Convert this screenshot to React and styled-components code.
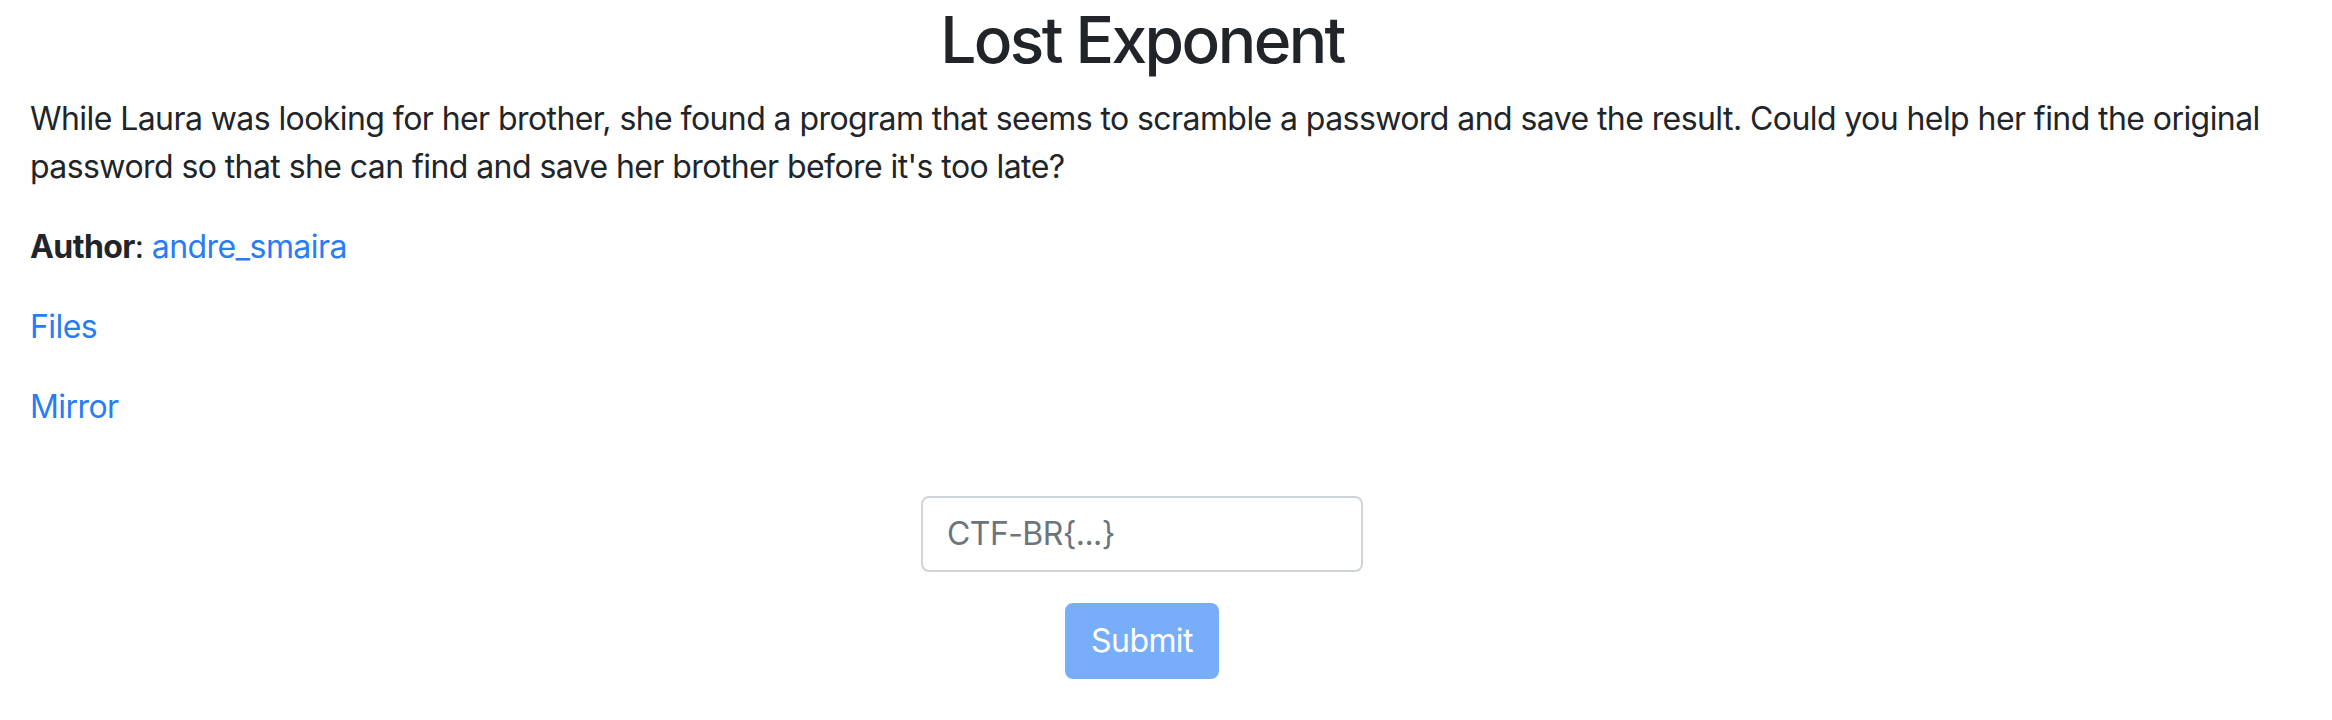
import React from 'react';
import styled, { createGlobalStyle } from 'styled-components';

const GlobalStyle = createGlobalStyle`
  html, body {
    margin: 0;
    padding: 0;
    background: #fff;
  }
  body {
    font-family: Inter, "Noto Sans", "Liberation Sans", sans-serif;
    font-size: 32px;
    line-height: 1.5;
    letter-spacing: -0.018em;
    color: #212529;
  }
`;

const Page = styled.div`
  padding: 2px 30px 0 30px;
`;

const Centered = styled.div`
  padding-right: 48px;
  text-align: center;
`;

const Title = styled.h2`
  margin: 0 0 16px;
  font-size: 64px;
  font-weight: 500;
  line-height: 1.2;
  letter-spacing: -0.04em;
`;

const Paragraph = styled.p`
  margin: 0 0 32px;
`;

const Link = styled.a`
  color: #2a7cf6;
  text-decoration: none;
`;

const Form = styled.form`
  margin-top: 65px;
  display: flex;
  flex-direction: column;
  align-items: center;
  gap: 31px;
`;

const FlagInput = styled.input`
  box-sizing: border-box;
  width: 442px;
  height: 76px;
  padding: 12px 24px;
  font-family: inherit;
  font-size: 32px;
  line-height: 1.5;
  letter-spacing: inherit;
  color: #495057;
  border: 2px solid #ced4da;
  border-radius: 8px;
  outline: none;

  &::placeholder {
    color: #6c757d;
  }
`;

const SubmitButton = styled.button`
  box-sizing: border-box;
  height: 76px;
  padding: 12px 24px;
  font-family: inherit;
  font-size: 32px;
  line-height: 1.5;
  letter-spacing: inherit;
  color: #fff;
  background: #78adf9;
  border: 2px solid #78adf9;
  border-radius: 8px;
  cursor: default;
`;

export default function App() {
  return (
    <>
      <GlobalStyle />
      <Page>
        <Centered>
          <Title>Lost Exponent</Title>
        </Centered>
        <Paragraph>
          While Laura was looking for her brother, she found a program that seems to scramble a password and save the result. Could you help her find the original password so that she can find and save her brother before it's too late?
        </Paragraph>
        <Paragraph>
          <strong>Author</strong>: <Link href="#">andre_smaira</Link>
        </Paragraph>
        <Paragraph>
          <Link href="#">Files</Link>
        </Paragraph>
        <Paragraph>
          <Link href="#">Mirror</Link>
        </Paragraph>
        <Centered>
          <Form onSubmit={(e) => e.preventDefault()}>
            <FlagInput type="text" placeholder="CTF-BR{...}" />
            <SubmitButton type="submit" disabled>Submit</SubmitButton>
          </Form>
        </Centered>
      </Page>
    </>
  );
}
